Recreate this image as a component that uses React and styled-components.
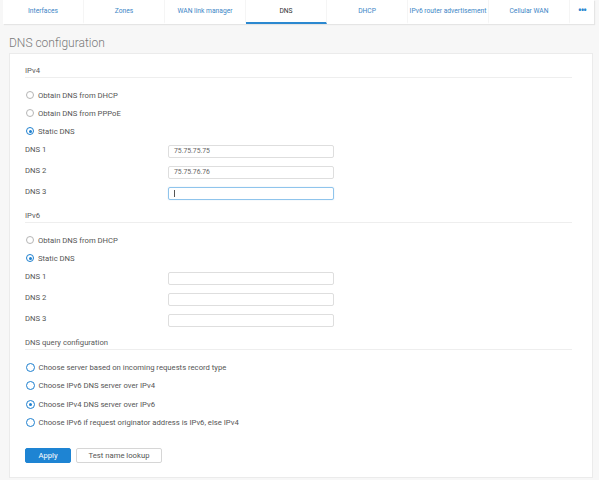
import React from "react"
import styled, { createGlobalStyle } from "styled-components"

const Global = createGlobalStyle`
  body {
    margin: 0;
    background: #f7f7f7;
    font-family: Roboto, "Liberation Sans", sans-serif;
  }
`;

const Page = styled.div`
  width: 599px;
  height: 480px;
  padding: 0 6px 0 9px;
  box-sizing: border-box;
  background: #f7f7f7;
`;

const TabBar = styled.div`
  display: flex;
  height: 24px;
  margin-left: -6px;
  margin-right: -1px;
  background: #fff;
  box-shadow: 1px 1px 1px rgba(0, 0, 0, 0.07);
`;

const Tab = styled.div`
  width: ${p => (p.$narrow ? "24px" : "81px")};
  flex-shrink: 0;
  display: flex;
  align-items: center;
  justify-content: center;
  font-size: 6.7px;
  color: ${p => (p.$active ? "#333" : "#3d86c6")};
  border-right: 1px solid #f5f5f5;
  box-sizing: border-box;
  border-bottom: 2px solid ${p => (p.$active ? "#2b88d0" : "transparent")};
  &:last-child { border-right: none; }
`;

const Dots = styled.span`
  font-size: 10px;
  font-weight: bold;
  letter-spacing: -1px;
  color: #2b88d0;
  line-height: 1;
`;

const Title = styled.h1`
  margin: 12px 0 3px;
  line-height: 14px;
  font-size: 12px;
  font-weight: 300;
  color: #7a7a7a;
`;

const Card = styled.div`
  background: #fff;
  border: 1px solid #ebebeb;
  padding: 12px 20px 15px 15px;
  box-sizing: border-box;
  height: 425px;
`;

const SectionHead = styled.div`
  font-size: 7.7px;
  line-height: 10px;
  color: #5a5a5a;
  padding-bottom: 1px;
  border-bottom: 1px solid #eeeeee;
  margin-top: ${p => (p.$first ? "0" : "8px")};
  margin-bottom: 8px;
`;

const RadioRow = styled.label`
  display: flex;
  align-items: center;
  height: ${p => (p.$tall ? "18.5px" : "18px")};
  font-size: 7.7px;
  color: #555;
  gap: 4px;
`;

const Circle = styled.span`
  width: ${p => (p.$strong ? "9px" : "8px")};
  height: ${p => (p.$strong ? "9px" : "8px")};
  box-sizing: border-box;
  margin-left: ${p => (p.$strong ? "0.5px" : "1px")};
  border-radius: 50%;
  border: ${p => (p.$strong ? "1.5px solid #1e80cf" : p.$on ? "1.2px solid #1e80cf" : "1px solid #b5b5b5")};
  display: flex;
  align-items: center;
  justify-content: center;
  &::after {
    content: "";
    width: 3px;
    height: 3px;
    border-radius: 50%;
    background: #1e80cf;
    display: ${p => (p.$on ? "block" : "none")};
  }
`;

const FieldRow = styled.div`
  display: flex;
  align-items: center;
  height: 21px;
`;

const FieldLabel = styled.span`
  width: 143px;
  font-size: 7.7px;
  color: #555;
  padding-bottom: 3px;
`;

const Input = styled.div`
  width: 166px;
  height: 13px;
  box-sizing: border-box;
  border-width: 1px;
  border-style: solid;
  border-color: ${p => (p.$focused ? "#8fc4ec" : "#dedede")};
  box-shadow: ${p => (p.$focused ? "0 0 1px rgba(80, 160, 230, 0.5)" : "none")};
  border-radius: 2px;
  font-size: 6.8px;
  color: #666;
  padding-left: 5px;
  display: flex;
  align-items: center;
  margin-top: 1px;
`;

const Caret = styled.span`
  width: 1px;
  height: 7px;
  background: #555;
`;

const Buttons = styled.div`
  display: flex;
  gap: 5px;
  margin-top: 16px;
`;

const Button = styled.button`
  height: 15px;
  width: ${p => p.$w}px;
  box-sizing: border-box;
  font-family: inherit;
  font-size: 7.7px;
  border-radius: 2px;
  padding: 0;
  cursor: pointer;
  background: ${p => (p.$primary ? "#1e84d3" : "#fff")};
  color: ${p => (p.$primary ? "#fff" : "#555")};
  border: 1px solid ${p => (p.$primary ? "#1e84d3" : "#d6d6d6")};
`;

const tabs = ["Interfaces", "Zones", "WAN link manager", "DNS", "DHCP", "IPv6 router advertisement", "Cellular WAN"];

function Radio({ on, strong, tall, children }) {
  return (
    <RadioRow $tall={tall}>
      <Circle $on={on} $strong={strong} />
      {children}
    </RadioRow>
  );
}

function Field({ label, value, focused }) {
  return (
    <FieldRow>
      <FieldLabel>{label}</FieldLabel>
      <Input $focused={focused}>{focused ? <Caret /> : value}</Input>
    </FieldRow>
  );
}

export default function App() {
  return (
    <Page>
      <Global />
      <TabBar>
        {tabs.map(t => (
          <Tab key={t} $active={t === "DNS"}>{t}</Tab>
        ))}
        <Tab $narrow><Dots>•••</Dots></Tab>
      </TabBar>
      <Title>DNS configuration</Title>
      <Card>
        <SectionHead $first>IPv4</SectionHead>
        <Radio>Obtain DNS from DHCP</Radio>
        <Radio>Obtain DNS from PPPoE</Radio>
        <Radio on>Static DNS</Radio>
        <Field label="DNS 1" value="75.75.75.75" />
        <Field label="DNS 2" value="75.75.76.76" />
        <Field label="DNS 3" focused />

        <SectionHead>IPv6</SectionHead>
        <Radio>Obtain DNS from DHCP</Radio>
        <Radio on>Static DNS</Radio>
        <Field label="DNS 1" />
        <Field label="DNS 2" />
        <Field label="DNS 3" />

        <SectionHead>DNS query configuration</SectionHead>
        <Radio strong tall>Choose server based on incoming requests record type</Radio>
        <Radio strong tall>Choose IPv6 DNS server over IPv4</Radio>
        <Radio strong tall on>Choose IPv4 DNS server over IPv6</Radio>
        <Radio strong tall>Choose IPv6 if request originator address is IPv6, else IPv4</Radio>

        <Buttons>
          <Button $primary $w={46}>Apply</Button>
          <Button $w={86}>Test name lookup</Button>
        </Buttons>
      </Card>
    </Page>
  );
}
